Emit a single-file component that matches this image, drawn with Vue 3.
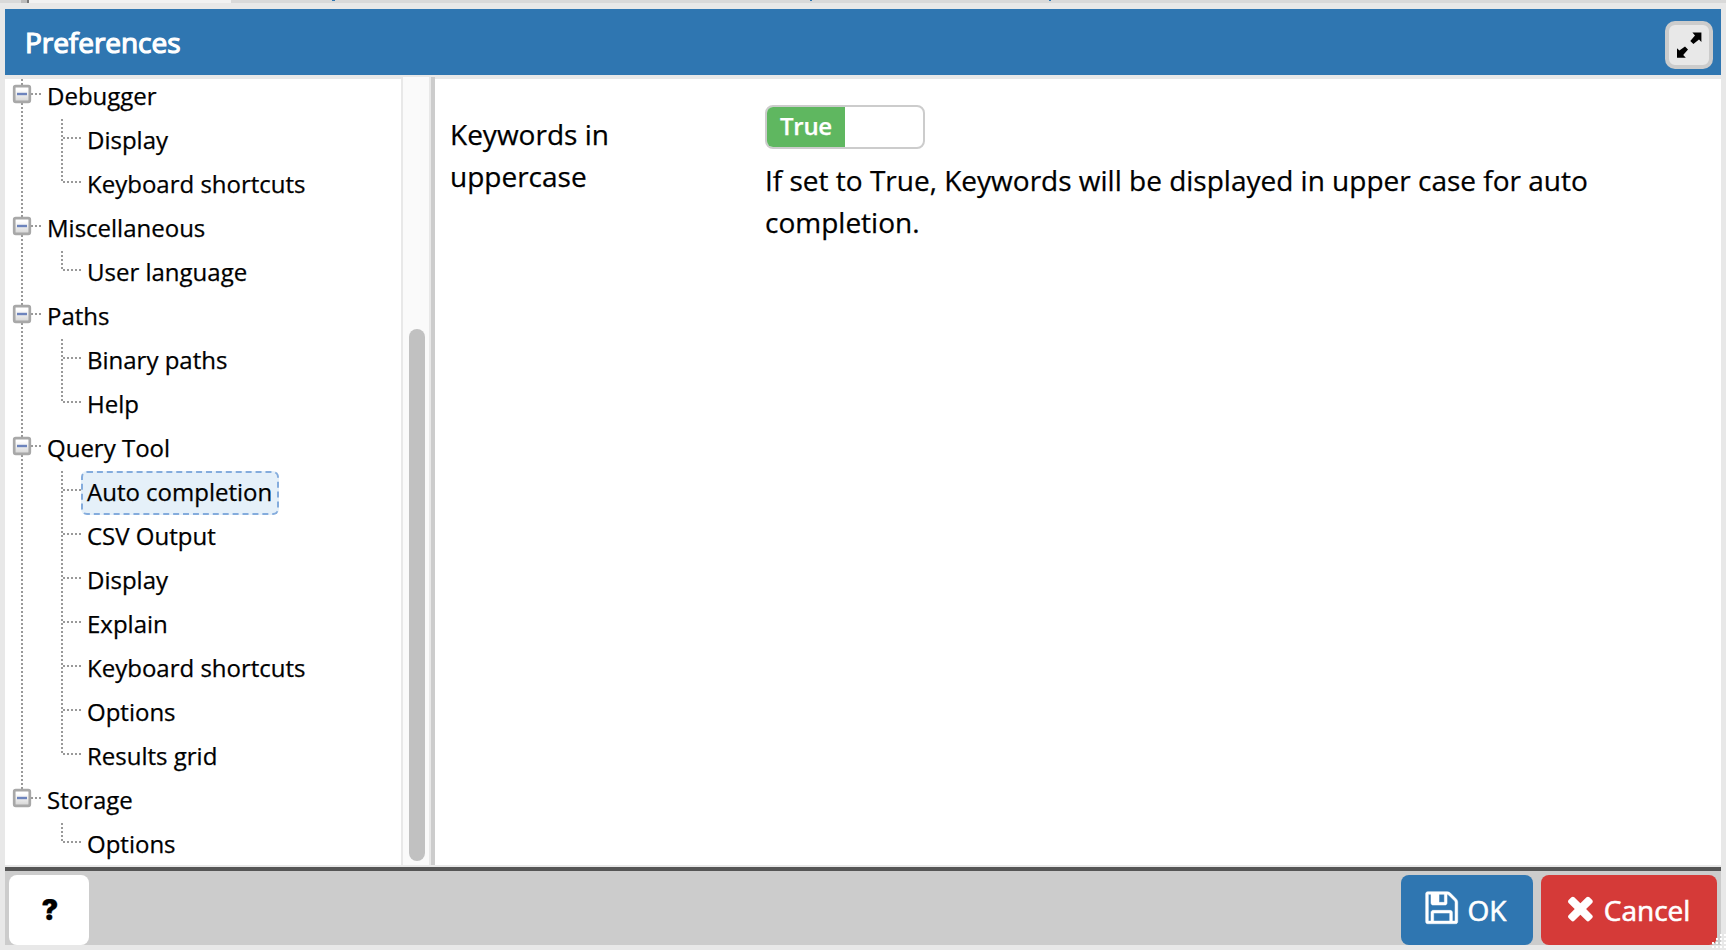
<script setup>
const rows = [
  { label: 'Debugger', group: true },
  { label: 'Display' },
  { label: 'Keyboard shortcuts', last: true },
  { label: 'Miscellaneous', group: true },
  { label: 'User language', last: true },
  { label: 'Paths', group: true },
  { label: 'Binary paths' },
  { label: 'Help', last: true },
  { label: 'Query Tool', group: true },
  { label: 'Auto completion', selected: true },
  { label: 'CSV Output' },
  { label: 'Display' },
  { label: 'Explain' },
  { label: 'Keyboard shortcuts' },
  { label: 'Options' },
  { label: 'Results grid', last: true },
  { label: 'Storage', group: true, end: true },
  { label: 'Options', last: true, end: true }
]
</script>

<template>
  <div class="page">
    <div class="behind"><i class="b1"></i><i class="b2"></i><i class="b3"></i><i class="b4"></i><i class="b5"></i><i class="b6"></i><i class="b7"></i></div>
    <div class="dialog">
      <header class="head">
        <h1>Preferences</h1>
        <button class="max" aria-label="Maximize">
          <svg viewBox="0 0 40 40" width="40" height="40">
            <path d="M23.4 7.5H32.4V16.9L30 14.6 24.4 19 21.3 16 26 10.4ZM16.8 32.7H8V23.2L10.4 25.5 16 21.6 19 24.6 14.2 29.9Z" />
          </svg>
        </button>
      </header>
      <main class="body">
        <nav class="tree">
          <div class="rows">
            <div v-for="(r, i) in rows" :key="i" class="row">
              <svg class="lines" :width="r.group ? 36 : 76" height="44">
                <g class="dots">
                  <path v-if="!(r.end && !r.group)" :d="r.end ? 'M17 0V12' : 'M17 0V44'" />
                  <path v-if="r.group" d="M26 19H36" />
                  <template v-else>
                    <path :d="r.last ? 'M57 0V19' : 'M57 0V44'" />
                    <path d="M58 19H76" />
                  </template>
                </g>
                <template v-if="r.group">
                  <rect x="9.2" y="11.2" width="15.6" height="15.6" rx="1.5" fill="url(#box)" stroke="#a8a8a8" stroke-width="2.7" />
                  <path d="M12 19H22" stroke="#6d84bd" stroke-width="2.4" />
                </template>
              </svg>
              <span class="label" :class="{ selected: r.selected }">{{ r.label }}</span>
            </div>
          </div>
          <svg class="defs" width="0" height="0"><defs><linearGradient id="box" x2="0" y2="1"><stop offset="0.2" stop-color="#fff" /><stop offset="1" stop-color="#d4d4d4" /></linearGradient></defs></svg>
        </nav>
        <div class="scroll"><div class="thumb"></div></div>
        <div class="splitter"></div>
        <section class="form">
          <label class="name">Keywords in uppercase</label>
          <div class="field">
            <div class="toggle"><span>True</span></div>
            <p>If set to True, Keywords will be displayed in upper case for auto completion.</p>
          </div>
        </section>
      </main>
      <footer class="foot">
        <button class="btn help">?</button>
        <button class="btn ok">
          <svg viewBox="0 0 1792 1792" width="37.4" height="37.4"><path d="M512 1536h768v-384h-768v384zm896 0h128v-896q0-14-10-38.5t-20-34.5l-281-281q-10-10-34-20t-39-10v416q0 40-28 68t-68 28h-576q-40 0-68-28t-28-68v-416h-128v1280h128v-416q0-40 28-68t68-28h832q40 0 68 28t28 68v416zm-384-928v-320q0-13-9.5-22.5t-22.5-9.5h-192q-13 0-22.5 9.5t-9.5 22.5v320q0 13 9.5 22.5t22.5 9.5h192q13 0 22.5-9.5t9.5-22.5zm640 32v928q0 40-28 68t-68 28h-1344q-40 0-68-28t-28-68v-1344q0-40 28-68t68-28h928q40 0 88 20t76 48l280 280q28 28 48 76t20 88z" stroke="#fff" stroke-width="24" /></svg>
          <span>OK</span>
        </button>
        <button class="btn cancel">
          <svg viewBox="302 0 1188 1792" width="24.8" height="37.4"><path d="M1490 1322q0 40-28 68l-136 136q-28 28-68 28t-68-28l-294-294-294 294q-28 28-68 28t-68-28l-136-136q-28-28-28-68t28-68l294-294-294-294q-28-28-28-68t28-68l136-136q28-28 68-28t68 28l294 294 294-294q28-28 68-28t68 28l136 136q28 28 28 68t-28 68l-294 294 294 294q28 28 28 68z" /></svg>
          <span>Cancel</span>
        </button>
      </footer>
    </div>
    <svg class="grip" width="16" height="16">
      <g fill="#fff"><rect x="10" y="0" width="2" height="2" /><rect x="14" y="0" width="2" height="2" /><rect x="6" y="4" width="2" height="2" /><rect x="10" y="4" width="2" height="2" /><rect x="14" y="4" width="2" height="2" /><rect x="2" y="8" width="2" height="2" /><rect x="6" y="8" width="2" height="2" /><rect x="10" y="8" width="2" height="2" /><rect x="14" y="8" width="2" height="2" /><rect x="2" y="12" width="2" height="2" /><rect x="6" y="12" width="2" height="2" /><rect x="10" y="12" width="2" height="2" /><rect x="14" y="12" width="2" height="2" /></g>
    </svg>
  </div>
</template>

<style>
body { overflow: hidden; }
</style>

<style scoped>
* { box-sizing: border-box; }
.page { position: relative; width: 1726px; height: 950px; background: #e8e8e8; font-family: "Open Sans", sans-serif; color: #000; overflow: hidden; -webkit-text-stroke: 0.25px currentColor; }
.behind { height: 3px; background: #d9d9d9; display: flex; }
.behind i { height: 3px; flex: none; }
.b1 { width: 21px; background: #d9d9d9; }
.b2 { width: 6px; background: #bbb; }
.b3 { width: 2px; background: #777; }
.b4 { width: 202px; background: #f2f2f2; }
.behind .b5 { width: 3px; height: 1px; margin-left: 101px; background: #2f76b1; }
.behind .b6 { width: 2px; height: 1px; margin-left: 475px; background: #2f76b1; }
.behind .b7 { width: 2px; height: 1px; margin-left: 237px; background: #2f76b1; }
.dialog { margin: 6px 5px 0; height: 936px; display: flex; flex-direction: column; }
.head { height: 66px; flex: none; background: #2f76b1; display: flex; align-items: flex-start; justify-content: space-between; padding: 12px 8px 0 20px; }
h1 { margin: 2px 0 0; font-size: 28px; line-height: 38px; font-weight: 400; color: #fff; -webkit-text-stroke: 1.2px #fff; letter-spacing: -0.05px; }
button { font-family: inherit; border: 0; padding: 0; }
.max { width: 48px; height: 48px; border: 4px solid #ccc; border-radius: 10px; background: #e8e8e8; }
.max svg { display: block; }
.body { height: 788px; flex: none; margin-top: 2px; display: flex; overflow: hidden; }
.tree { width: 396px; border-top: 2px solid #e8e8e8; background: #fff; flex: none; overflow: hidden; }
.rows { margin-top: -4px; }
.row { height: 44px; display: flex; align-items: flex-start; }
.lines { flex: none; display: block; }
.lines .dots path { fill: none; stroke: #999; stroke-width: 2; stroke-dasharray: 2 2; }
.label { font-size: 24px; line-height: 38px; height: 44px; padding: 0 5px 0 4px; border: 2px solid transparent; border-radius: 6px; white-space: nowrap; }
.label.selected { background: #e5f0f9; border: 2px dashed #84acdd; }
.defs { display: block; }
.scroll { width: 30px; flex: none; border: solid #e8e8e8; border-width: 0 2px; background: #fafafa; padding: 252px 4px 0 6px; }
.thumb { width: 16px; height: 532px; border-radius: 8px; background: #c1c1c1; }
.splitter { width: 4px; flex: none; background: #ccc; }
.form { flex: 1; margin-top: 2px; background: #fff; display: flex; padding: 26px 20px 0 15px; font-size: 28px; line-height: 42px; }
.name { width: 200px; margin-right: 115px; padding-top: 8px; }
.field { flex: 1; }
.toggle { width: 160px; height: 44px; border: 2px solid #ccc; border-radius: 8px; background: #fff; overflow: hidden; }
.toggle span { display: block; width: 78px; height: 40px; background: #5fb760; color: #fff; font-size: 24px; font-weight: 600; line-height: 37px; text-align: center; letter-spacing: -0.3px; }
.field p { margin: 10px 0 0; width: 850px; }
.foot { margin-top: 2px; height: 78px; flex: none; border-top: 4px solid #555; background: #ccc; display: flex; align-items: flex-start; padding: 4px 4px 0; }
.btn { height: 70px; border-radius: 8px; display: flex; align-items: flex-start; color: #fff; font-size: 28px; line-height: 38px; padding-top: 14px; }
.btn svg { fill: #fff; display: block; flex: none; }
.btn span { margin-top: 2px; -webkit-text-stroke-width: 0.6px; }
.help { width: 80px; background: #fff; color: #000; font-family: Inter, sans-serif; font-weight: 900; justify-content: center; margin-right: auto; padding-top: 16px; padding-left: 2px; }
.ok { width: 132px; background: #2f76b1; margin-right: 8px; padding-left: 22px; }
.ok span { margin-left: 7px; }
.cancel { width: 176px; background: #d53a38; padding-left: 27px; }
.cancel span { margin-left: 11px; }
.grip { position: absolute; right: 0; bottom: 0; }
</style>
